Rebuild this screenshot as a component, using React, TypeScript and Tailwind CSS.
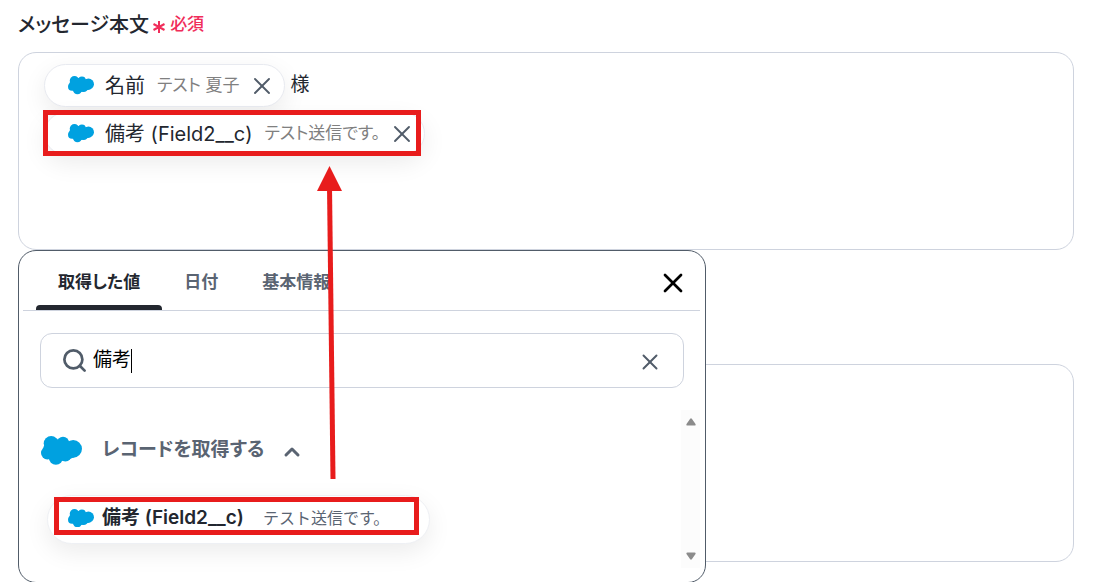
import { useState } from "react"
import { ChevronUp, Search, X } from "lucide-react"

const tabs = ["取得した値", "日付", "基本情報"]

function Cloud({ className }: { className?: string }) {
  return (
    <svg viewBox="0 0 121 85" className={className} fill="#00a1e0" aria-hidden="true">
      <circle cx="30" cy="22" r="22" />
      <circle cx="65" cy="20" r="18" />
      <circle cx="95" cy="38" r="26" />
      <circle cx="19" cy="50" r="19" />
      <circle cx="44" cy="64" r="21" />
      <circle cx="72" cy="56" r="19" />
      <path d="M40 8L55 11 85 16 105 60 80 70 58 74 22 67 5 40 9 28z" />
    </svg>
  )
}

function Chip({ label, sample }: { label: string; sample: string }) {
  return (
    <span className="inline-flex h-[43px] items-center rounded-full border border-[#e8eaf0] bg-white pl-[23px] pr-2 shadow-[0_8px_24px_rgba(0,0,0,0.08)]">
      <Cloud className="w-[26px] shrink-0" />
      <span className="ml-[11px] text-[20px] text-[#23272f]">{label}</span>
      <span className="ml-3 text-[17px] text-[#808080] [font-feature-settings:'palt']">{sample}</span>
      <button aria-label={`${label}を削除`} className="ml-2 text-[#515c69]">
        <X size={28} strokeWidth={1.6} />
      </button>
    </span>
  )
}

function ValuePicker() {
  const [active, setActive] = useState(tabs[0])
  const [query, setQuery] = useState("備考")

  return (
    <div className="absolute left-0 top-full w-[688px] rounded-[18px] border border-[#515c69] bg-white pb-[14px] pl-1 pr-[5px]">
      <div className="flex h-[60px] items-stretch border-b border-[#ced3de] pl-[13px] pr-[11px]">
        <div role="tablist" className="flex [font-feature-settings:'palt']">
          {tabs.map((tab) => (
            <button
              key={tab}
              role="tab"
              aria-selected={tab === active}
              onClick={() => setActive(tab)}
              className={
                tab === active
                  ? "relative px-[22px] pt-1 text-[17px] font-semibold text-[#23272f] after:absolute after:inset-x-0 after:bottom-0 after:h-[5px] after:rounded-t after:bg-[#23272f]"
                  : "px-[22px] pt-1 text-[17px] font-semibold text-[#5a6472]"
              }
            >
              {tab}
            </button>
          ))}
        </div>
        <button aria-label="閉じる" className="ml-auto pt-1 text-black">
          <X size={32} strokeWidth={2} />
        </button>
      </div>

      <div className="ml-[17px] mr-4 mt-[22px] flex h-[55px] items-center rounded-xl border border-[#ced3de] px-5">
        <Search size={27} strokeWidth={2.4} className="text-[#515c69]" />
        <input
          aria-label="値を検索"
          value={query}
          onChange={(e) => setQuery(e.target.value)}
          className="field-sizing-content ml-[5px] text-[19px] text-black caret-transparent outline-none"
        />
        <span className="h-6 w-px bg-black" />
        <button aria-label="検索をクリア" onClick={() => setQuery("")} className="ml-auto pt-0.5 text-[#515c69]">
          <X size={26} strokeWidth={1.8} />
        </button>
      </div>

      <div className="mt-[22px] flex h-[158px] justify-between">
        <div className="pl-[18px] pt-[26px]">
          <button className="flex items-center text-[19px] leading-7 font-semibold text-[#5a6472] [font-feature-settings:'palt']">
            <Cloud className="w-[41px]" />
            <span className="ml-5">レコードを取得する</span>
            <ChevronUp size={24} strokeWidth={3} className="ml-4 mt-1" />
          </button>
          <button className="relative ml-1.5 mt-[30px] flex h-[49px] items-center rounded-full border border-[#eef0f4] bg-white pb-0.5 pl-5 pr-10 shadow-[0_8px_24px_rgba(0,0,0,0.08)]">
            <Cloud className="w-[26px]" />
            <span className="ml-2 text-[19px] font-semibold text-[#23272f]">備考 (Field2__c)</span>
            <span className="ml-[19px] text-base text-[#5a6472]">テスト送信です。</span>
            <span className="pointer-events-none absolute left-1.5 right-2.5 top-px h-[38px] border-[5px] border-[#e81c1c]" />
          </button>
        </div>
        <div className="flex w-[19px] flex-col items-center justify-between bg-[#fcfcfc] py-2">
          <svg width="10" height="8" fill="#8b8b8b" aria-hidden="true">
            <path d="M4 1q1-1.500 2 0l3.500 5q.5 1.500-1 1.500h-7q-1.500 0-1-1.500z" />
          </svg>
          <svg width="10" height="8" fill="#8b8b8b" aria-hidden="true">
            <path d="M4 7q1 1.500 2 0l3.500-5q.5-1.500-1-1.500h-7q-1.500 0-1 1.500z" />
          </svg>
        </div>
      </div>
    </div>
  )
}

export default function App() {
  return (
    <div
      lang="ja"
      className="relative min-h-screen overflow-hidden bg-white pl-[18px] pr-[23px] font-['Inter','Noto_Sans_CJK_JP',sans-serif]"
    >
      <div className="flex h-[52px] items-center pb-0.5">
        <span id="body-label" className="text-[20px] font-medium text-[#23272f] [font-feature-settings:'palt']">
          メッセージ本文
        </span>
        <span className="ml-[3px] flex items-center text-[17px] font-medium text-[#f02d5a]">
          <svg width="14" height="14" viewBox="0 0 14 14" className="mr-1 mt-1" stroke="currentColor" strokeWidth="2" aria-hidden="true">
            <path d="M7 1v12M1.500 4l11 6M12.500 4l-11 6" />
          </svg>
          必須
        </span>
      </div>

      <div className="relative">
        <div
          role="textbox"
          aria-labelledby="body-label"
          className="h-[198px] rounded-[18px] border border-[#ced3de] px-[25px] pt-[11px]"
        >
          <div className="flex items-center gap-1.5 text-[19px] text-[#23272f]">
            <Chip label="名前" sample="テスト 夏子" />
            様
          </div>
          <div className="relative mt-[5px] w-fit">
            <Chip label="備考 (Field2__c)" sample="テスト送信です。" />
            <span className="pointer-events-none absolute -left-px -top-0.5 right-1 h-[46px] border-[5px] border-[#e81c1c]" />
          </div>
        </div>
        <ValuePicker />
      </div>

      <div role="textbox" aria-label="追加メッセージ" className="mt-[114px] h-[198px] rounded-[18px] border border-[#ced3de]" />

      <svg width="26" height="314" viewBox="0 0 26 314" className="pointer-events-none absolute left-[317px] top-[166px]" aria-hidden="true">
        <path d="M12.500 20L16 313" stroke="#e81c1c" strokeWidth="5" />
        <path d="M12.500 0L25 25H0z" fill="#e81c1c" />
      </svg>
    </div>
  )
}
